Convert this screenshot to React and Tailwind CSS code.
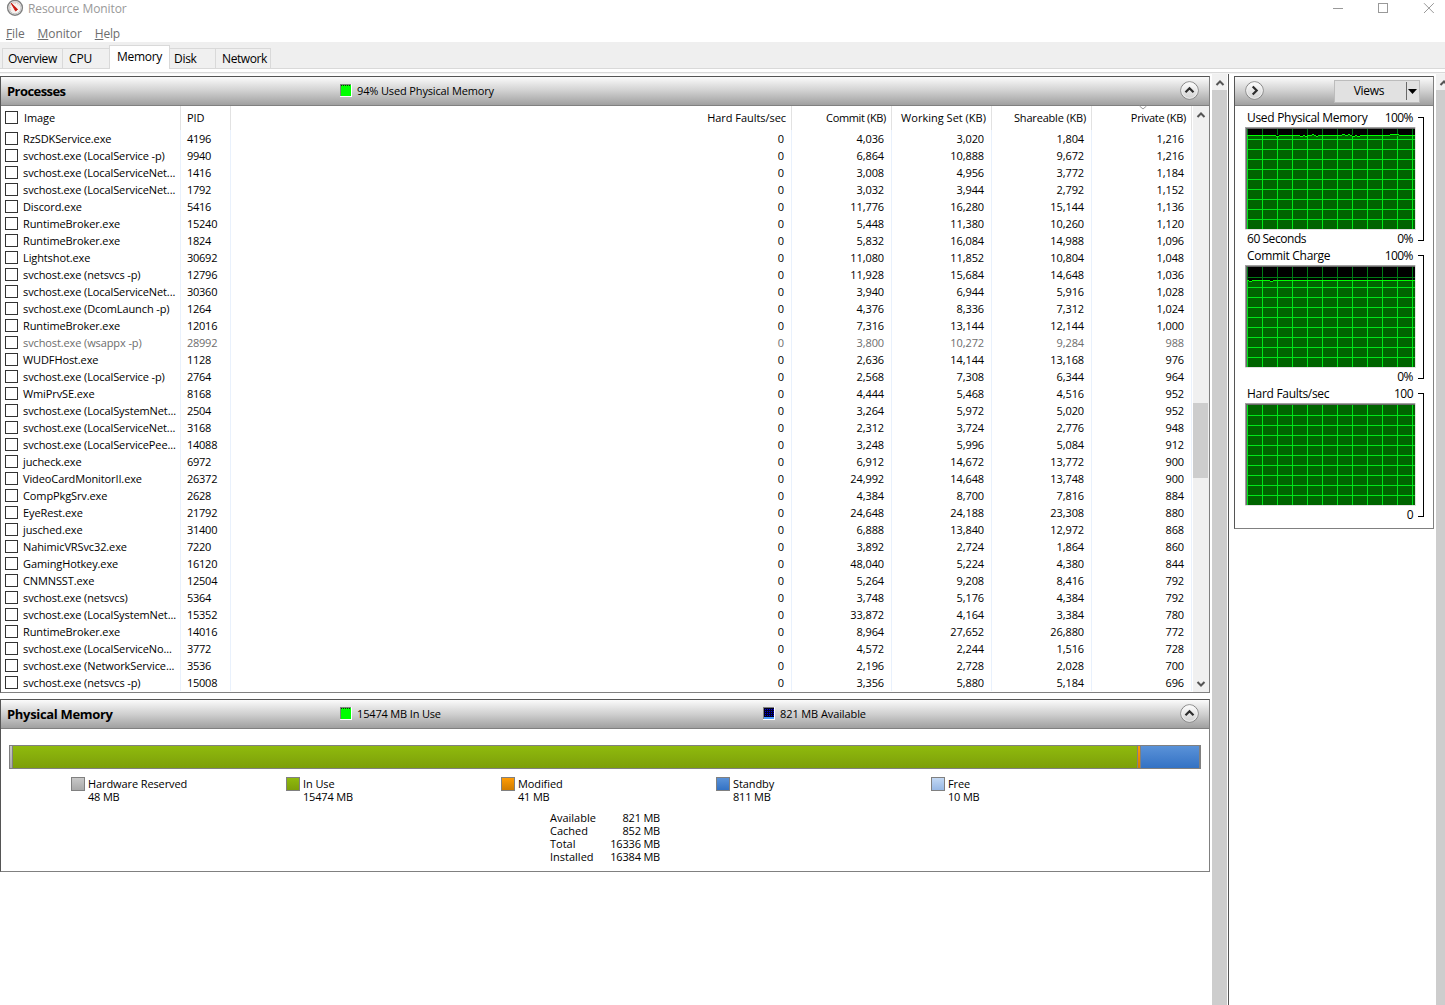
import React from 'react';

const GRAY_HEADER = 'bg-linear-to-b from-[#fbfbfb] via-[#d0d0d0] to-[#a0a0a0]';

// name, pid, commit, working set, shareable, private, suspended
const PROCESSES = [
  ['RzSDKService.exe', 4196, '4,036', '3,020', '1,804', '1,216'],
  ['svchost.exe (LocalService -p)', 9940, '6,864', '10,888', '9,672', '1,216'],
  ['svchost.exe (LocalServiceNet...', 1416, '3,008', '4,956', '3,772', '1,184'],
  ['svchost.exe (LocalServiceNet...', 1792, '3,032', '3,944', '2,792', '1,152'],
  ['Discord.exe', 5416, '11,776', '16,280', '15,144', '1,136'],
  ['RuntimeBroker.exe', 15240, '5,448', '11,380', '10,260', '1,120'],
  ['RuntimeBroker.exe', 1824, '5,832', '16,084', '14,988', '1,096'],
  ['Lightshot.exe', 30692, '11,080', '11,852', '10,804', '1,048'],
  ['svchost.exe (netsvcs -p)', 12796, '11,928', '15,684', '14,648', '1,036'],
  ['svchost.exe (LocalServiceNet...', 30360, '3,940', '6,944', '5,916', '1,028'],
  ['svchost.exe (DcomLaunch -p)', 1264, '4,376', '8,336', '7,312', '1,024'],
  ['RuntimeBroker.exe', 12016, '7,316', '13,144', '12,144', '1,000'],
  ['svchost.exe (wsappx -p)', 28992, '3,800', '10,272', '9,284', '988', true],
  ['WUDFHost.exe', 1128, '2,636', '14,144', '13,168', '976'],
  ['svchost.exe (LocalService -p)', 2764, '2,568', '7,308', '6,344', '964'],
  ['WmiPrvSE.exe', 8168, '4,444', '5,468', '4,516', '952'],
  ['svchost.exe (LocalSystemNet...', 2504, '3,264', '5,972', '5,020', '952'],
  ['svchost.exe (LocalServiceNet...', 3168, '2,312', '3,724', '2,776', '948'],
  ['svchost.exe (LocalServicePee...', 14088, '3,248', '5,996', '5,084', '912'],
  ['jucheck.exe', 6972, '6,912', '14,672', '13,772', '900'],
  ['VideoCardMonitorII.exe', 26372, '24,992', '14,648', '13,748', '900'],
  ['CompPkgSrv.exe', 2628, '4,384', '8,700', '7,816', '884'],
  ['EyeRest.exe', 21792, '24,648', '24,188', '23,308', '880'],
  ['jusched.exe', 31400, '6,888', '13,840', '12,972', '868'],
  ['NahimicVRSvc32.exe', 7220, '3,892', '2,724', '1,864', '860'],
  ['GamingHotkey.exe', 16120, '48,040', '5,224', '4,380', '844'],
  ['CNMNSST.exe', 12504, '5,264', '9,208', '8,416', '792'],
  ['svchost.exe (netsvcs)', 5364, '3,748', '5,176', '4,384', '792'],
  ['svchost.exe (LocalSystemNet...', 15352, '33,872', '4,164', '3,384', '780'],
  ['RuntimeBroker.exe', 14016, '8,964', '27,652', '26,880', '772'],
  ['svchost.exe (LocalServiceNo...', 3772, '4,572', '2,244', '1,516', '728'],
  ['svchost.exe (NetworkService...', 3536, '2,196', '2,728', '2,028', '700'],
  ['svchost.exe (netsvcs -p)', 15008, '3,356', '5,880', '5,184', '696'],
];

const LEGEND = [
  { label: 'Hardware Reserved', value: '48 MB', fill: 'from-[#c8c8c8] to-[#a9a9a9]' },
  { label: 'In Use', value: '15474 MB', fill: 'from-[#8fba0d] to-[#7d9f0a]' },
  { label: 'Modified', value: '41 MB', fill: 'from-[#ff9c05] to-[#d17c00]' },
  { label: 'Standby', value: '811 MB', fill: 'from-[#5a92d8] to-[#3372c4]' },
  { label: 'Free', value: '10 MB', fill: 'from-[#c3d8f3] to-[#98b8e4]' },
];

const TOTALS = [
  ['Available', '821 MB'],
  ['Cached', '852 MB'],
  ['Total', '16336 MB'],
  ['Installed', '16384 MB'],
];

const COLS = 'grid grid-cols-[181px_50px_561px_100px_100px_100px_100px]';

const Checkbox = () => <span className="block h-[13px] w-[13px] shrink-0 border border-[#333] bg-white" />;

const Chevron = ({ className, d = 'M1.5 6 L5 2.5 L8.5 6', stroke = '#555', width = 2 }) => (
  <svg width="10" height="8" viewBox="0 0 10 8" className={className}>
    <path d={d} fill="none" stroke={stroke} strokeWidth={width} />
  </svg>
);

const RoundButton = ({ right }) => (
  <svg width="19" height="19" viewBox="0 0 19 19" className="mb-px shrink-0">
    <defs>
      <linearGradient id="round" x1="0" y1="0" x2="0" y2="1">
        <stop offset="0" stopColor="#fff" />
        <stop offset="1" stopColor="#cfcfcf" />
      </linearGradient>
    </defs>
    <circle cx="9.5" cy="9.5" r="8.8" fill="url(#round)" stroke="#858585" />
    <circle cx="9.5" cy="9.5" r="7.8" fill="none" stroke="#f4f4f4" strokeWidth="0.8" />
    <path
      d={right ? 'M7.7 5.5 L11.7 9.5 L7.7 13.5' : 'M5.5 11.3 L9.5 7.3 L13.5 11.3'}
      fill="none" stroke="#2d2d2d" strokeWidth="2.2"
    />
  </svg>
);

// Small sunken meter shown in the panel headers
const Meter = ({ blue }) => (
  <svg width="12" height="13" viewBox="0 0 12 13" shapeRendering="crispEdges" className="mb-px shrink-0">
    <rect width="12" height="13" fill="#fff" />
    <rect width="11" height="12" fill="#808080" />
    <rect x="1" y="1" width="10" height="11" fill={blue ? '#0000e0' : '#00ff00'} />
    {blue ? (
      <>
        {[1, 3, 5, 7, 9].map((n) => (
          <g key={n} fill="#000020">
            <rect x="1" y={n} width="10" height="1" />
            <rect x={n} y="1" width="1" height="9" />
          </g>
        ))}
        <rect x="1" y="10" width="10" height="2" fill="#4a9cff" />
      </>
    ) : (
      <path d="M1 1.5H11" stroke="#003000" strokeDasharray="1 1" />
    )}
  </svg>
);

const PanelHeader = ({ title, titleClass, children }) => (
  <div className={`flex h-[29px] items-center border-b border-[#808080] pl-[6px] pr-[10px] ${GRAY_HEADER}`}>
    <h2 className={`w-[333px] text-[13px] font-bold leading-[28px] ${titleClass}`}>{title}</h2>
    {children}
    <span className="flex-1" />
    <RoundButton />
  </div>
);

const Chart = ({ title, max, min, footer, level, trace }) => (
  <div className="flex h-[138px] text-[12px] leading-[16px]">
    <div className="w-[173px] shrink-0">
      <div className="flex h-[17px] justify-between pl-[2px] pr-[5px]">
        <span className="tracking-[-0.3px]">{title}</span>
        <span className="tracking-[-0.55px]">{max}</span>
      </div>
      <svg width="171" height="103" viewBox="0 0 171 103" shapeRendering="crispEdges" className="block">
        <rect width="171" height="103" fill="#e3e3e3" />
        <rect width="170" height="102" fill="#a0a0a0" />
        <rect x="1" y="1" width="169" height="101" fill="#696969" />
        <rect x="2" y="2" width="168" height="100" fill="#000" />
        <rect x="2" y={2 + level} width="168" height={100 - level} fill="#006400" />
        {Array.from({ length: 12 }, (_, i) => (
          <g key={i}>
            <rect x={2 + i * 15} y="2" width="1" height="100" fill="#007d15" />
            <rect x={2 + i * 15} y={2 + level} width="1" height={100 - level} fill="#00e61a" />
          </g>
        ))}
        {Array.from({ length: 9 }, (_, i) => (
          <rect key={i} x="2" y={12 + i * 10} width="168" height="1" fill={10 + i * 10 < level ? '#007d15' : '#00e61a'} />
        ))}
        {trace && (
          <>
            <rect x="2" y={2 + level} width="168" height="1" fill="#00ff00" />
            {trace.map(([x, w, dy]) => (
              <g key={x}>
                <rect x={x} y={2 + level} width={w} height="1" fill={dy > 0 ? '#000' : '#006400'} />
                <rect x={x} y={2 + level + dy} width={w} height="1" fill="#00ff00" />
              </g>
            ))}
          </>
        )}
      </svg>
      <div className="flex h-[18px] justify-between pl-[2px] pr-[5px] pt-[1px]">
        <span className="tracking-[-0.45px]">{footer}</span>
        <span className="tracking-[-0.55px]">{min}</span>
      </div>
    </div>
    <div className="mt-[7px] h-[124px] w-[6px] border-y border-r border-black" />
  </div>
);

const TitleBar = () => (
  <div className="flex h-[24px] items-start pl-[6px] pr-[10px]">
    <svg width="18" height="17" viewBox="0 0 18 17" className="shrink-0">
      <circle cx="9" cy="7.8" r="7.4" fill="#fafafa" stroke="#808080" strokeWidth="1.4" />
      <circle cx="9" cy="7.8" r="6" fill="#f8f3f0" stroke="#c4c4c4" strokeWidth="1" />
      <path d="M4.8 10.5 A4.8 4.8 0 0 1 13.2 5.6" fill="none" stroke="#d9b3aa" strokeWidth="1" strokeDasharray="1.2 1.2" />
      <path d="M5.2 3.2 L11.6 9.4 L9.6 11 Z" fill="#c81810" stroke="#c81810" strokeWidth="0.9" />
    </svg>
    <span className="ml-[4px] text-[12px] leading-[18px] tracking-[-0.18px] text-[#999] [word-spacing:0.5px]">
      <span className="tracking-[-0.1px]">Resource Monitor</span>
    </span>
    <span className="flex-1" />
    <svg width="102" height="16" viewBox="0 0 102 16" fill="none" stroke="#999" className="shrink-0">
      <path d="M0 8.5H10" shapeRendering="crispEdges" />
      <rect x="45.5" y="3.5" width="9" height="9" shapeRendering="crispEdges" />
      <path d="M91 3.2 L100.8 13 M100.8 3.2 L91 13" />
    </svg>
  </div>
);

const ProcessPanel = () => (
  <section className="h-[617px] border border-[#808080] border-l-[#555] border-t-[#555]">
    <PanelHeader title="Processes" titleClass="tracking-[-0.56px]">
      <Meter />
      <span className="ml-[5px] tracking-[-0.14px]">94% Used Physical Memory</span>
    </PanelHeader>
    <div className="flex h-[586px]">
      <div className="w-[1191px] shrink-0">
        <div className={`${COLS} -ml-px h-[24px] leading-[24px] [&>div]:border-r [&>div]:border-[#e2e2e2]`}>
          <div className="flex gap-[6px] pl-[5px]">
            <span className="pt-[5px]"><Checkbox /></span>Image
          </div>
          <div className="pl-[6px]">PID</div>
          <div className="pr-[5px] text-right tracking-[-0.05px]">Hard Faults/sec</div>
          <div className="pr-[5px] text-right tracking-[-0.35px]">Commit (KB)</div>
          <div className="pr-[5px] text-right tracking-[0.01px]">Working Set (KB)</div>
          <div className="pr-[5px] text-right tracking-[-0.18px]">Shareable (KB)</div>
          <div className="relative pr-[5px] text-right tracking-[-0.3px]">
            Private (KB)
            <Chevron className="absolute left-[46px] -top-px" d="M1.5 1 L5 4 L8.5 1" stroke="#999" width={1} />
          </div>
        </div>
        <div className="-ml-px h-[562px]">
          {PROCESSES.map(([name, pid, commit, working, shareable, priv, suspended]) => (
            <div
              key={pid}
              className={`${COLS} h-[17px] leading-[17px] tracking-[-0.11px] [&>div]:border-r [&>div]:border-[#e9f1fc] ${suspended ? 'text-[#6d6d6d]' : ''}`}
            >
              <div className="flex items-start gap-[5px] whitespace-nowrap pl-[5px]">
                <span className="pt-[2px]"><Checkbox /></span>{name}
              </div>
              <div className="pl-[6px] tracking-[-0.25px]">{pid}</div>
              <div className="pr-[7px] text-right">0</div>
              <div className="pr-[7px] text-right">{commit}</div>
              <div className="pr-[7px] text-right">{working}</div>
              <div className="pr-[7px] text-right">{shareable}</div>
              <div className="pr-[7px] text-right">{priv}</div>
            </div>
          ))}
        </div>
      </div>
      <div className="ml-px flex w-[16px] flex-col items-center bg-[#f0f0f0]">
        <Chevron className="mt-[5px]" />
        <div className="mt-[284px] mr-px h-[75px] w-[15px] bg-[#cdcdcd]" />
        <span className="flex-1" />
        <Chevron className="mb-[4px]" d="M1.5 2 L5 5.5 L8.5 2" />
      </div>
    </div>
  </section>
);

const MemoryPanel = () => (
  <section className="mt-[6px] h-[173px] border border-[#808080] border-l-[#555] border-t-[#555]">
    <PanelHeader title="Physical Memory" titleClass="tracking-[-0.32px]">
      <Meter />
      <span className="ml-[5px] w-[406px] tracking-[-0.16px]">15474 MB In Use</span>
      <Meter blue />
      <span className="ml-[5px]">821 MB Available</span>
    </PanelHeader>
    <div className="ml-[8px] mt-[16px] flex h-[24px] w-[1192px] gap-px border border-r-2 border-[#808080] bg-[#808080]">
      <div className="w-[2px] bg-linear-to-b from-[#c8c8c8] to-[#a9a9a9]" />
      <div className="w-[1124px] bg-linear-to-b from-[#8fba0d] to-[#7d9f0a]" />
      <div className="w-[2px] bg-linear-to-b from-[#ff9c05] to-[#d17c00]" />
      <div className="flex-1 bg-linear-to-b from-[#5a92d8] to-[#3372c4]" />
    </div>
    <div className="ml-[70px] mt-[8px] flex leading-[13px]">
      {LEGEND.map(({ label, value, fill }) => (
        <div key={label} className="flex w-[215px] gap-[3px]">
          <span className={`h-[14px] w-[14px] border border-[#808080] bg-linear-to-b ${fill}`} />
          <div>
            <div>{label}</div>
            <div className="tracking-[-0.18px]">{value}</div>
          </div>
        </div>
      ))}
    </div>
    <div className="ml-[549px] mt-[8px] w-[110px] leading-[13px]">
      {TOTALS.map(([label, value]) => (
        <div key={label} className="flex justify-between">
          <span className="tracking-[0px]">{label}</span>
          <span className="tracking-[-0.2px]">{value}</span>
        </div>
      ))}
    </div>
  </section>
);

const ChartPanel = () => (
  <aside className="h-[453px] w-[200px] border border-[#808080] border-l-[#555] border-t-[#555]">
    <div className={`flex h-[29px] items-center border-b border-[#808080] pl-[10px] pr-[13px] ${GRAY_HEADER}`}>
      <RoundButton right />
      <span className="flex-1" />
      <div className="flex h-[23px] w-[86px] items-center border border-[#bcbcbc] bg-[#e1e1e1] text-[12px]">
        <span className="w-[71px] pr-[3px] text-center tracking-[-0.3px]">Views</span>
        <span className="h-[18px] w-px bg-[#696969]" />
        <svg width="9" height="5" viewBox="0 0 9 5" className="ml-px"><path d="M0 0H9L4.5 5Z" /></svg>
      </div>
    </div>
    <div className="pl-[10px] pt-[4px]">
      <Chart
        title="Used Physical Memory" max="100%" min="0%" footer="60 Seconds" level={6}
        trace={[[31, 3, 1], [55, 3, 1], [60, 2, 1], [67, 2, -1], [71, 2, 1], [97, 3, -1], [103, 2, -1], [107, 3, 1], [112, 3, 1], [145, 9, -1]]}
      />
      <Chart title="Commit Charge" max="100%" min="0%" level={13} trace={[[4, 3, 1], [25, 3, 1]]} />
      <Chart title="Hard Faults/sec" max="100" min="0" level={0} />
    </div>
  </aside>
);

const ScrollColumn = ({ className }) => (
  <div className={`flex flex-col bg-[#cdcdcd] ${className}`}>
    <div className="h-[16px] overflow-hidden bg-[#f0f0f0] pl-[3px] pt-[5px]"><Chevron /></div>
  </div>
);

const TAB = 'h-[20px] border border-b-0 border-[#d9d9d9] bg-[#f0f0f0] leading-[20px]';

export default function App() {
  return (
    <div className="flex h-[1005px] w-[1445px] flex-col overflow-hidden bg-white font-['Open_Sans','Noto_Sans',sans-serif] text-[11px] tracking-[-0.1px] text-black">
      <TitleBar />
      <nav className="flex h-[18px] gap-[13px] pl-[6px] text-[12px] leading-[20px] text-[#6d6d6d]">
        <span className="tracking-[-0.1px]"><u>F</u>ile</span>
        <span className="tracking-[-0.1px]"><u>M</u>onitor</span>
        <span className="tracking-[-0.2px]"><u>H</u>elp</span>
      </nav>
      <div className="flex h-[27px] items-end border-b border-[#d9d9d9] bg-[#efefef] pl-[2px] text-[12px]">
        <div className={`${TAB} w-[61px] pl-[5px] tracking-[-0.4px]`}>Overview</div>
        <div className={`${TAB} w-[46px] border-x-0 pl-[6px]`}>CPU</div>
        <div className="-mb-px h-[24px] w-[61px] border border-b-0 border-[#d9d9d9] bg-white pl-[7px] leading-[22px] tracking-[-0.3px]">Memory</div>
        <div className={`${TAB} w-[46px] border-l-0 pl-[4px] tracking-[-0.3px]`}>Disk</div>
        <div className={`${TAB} w-[55px] border-l-0 pl-[6px] tracking-[-0.4px]`}>Network</div>
      </div>
      <div className="mt-[3px] h-[2px] border-t border-[#d9d9d9] bg-[#f4f4f4]" />
      <main className="flex flex-1">
        <div className="w-[1210px] pt-[2px]">
          <ProcessPanel />
          <MemoryPanel />
        </div>
        <ScrollColumn className="ml-[2px] w-[15px]" />
        <div className="ml-px w-px bg-[#555]" />
        <div className="ml-[5px] pt-[2px]">
          <ChartPanel />
        </div>
        <ScrollColumn className="ml-[2px] w-[9px]" />
      </main>
    </div>
  );
}
